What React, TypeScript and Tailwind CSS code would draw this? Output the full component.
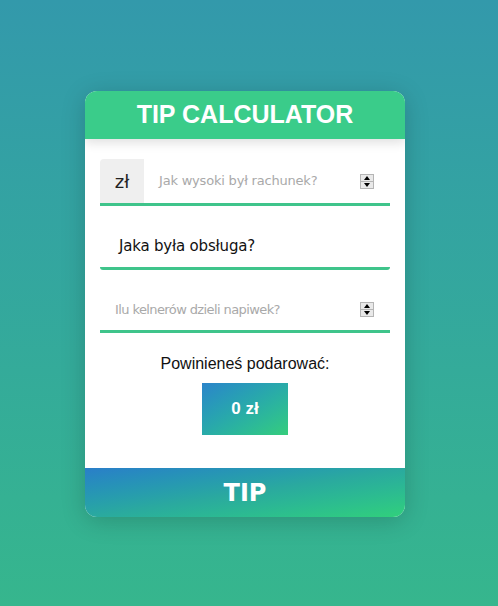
import React from "react";

function Spinner() {
  return (
    <div className="flex h-[15px] w-[14px] flex-col border border-[#b5b5b5] bg-[#e9e9e9]">
      <div className="flex flex-1 items-center justify-center border-b border-[#b5b5b5]">
        <div className="h-0 w-0 border-x-[3px] border-b-[4px] border-x-transparent border-b-black" />
      </div>
      <div className="flex flex-1 items-center justify-center">
        <div className="h-0 w-0 border-x-[3px] border-t-[4px] border-x-transparent border-t-black" />
      </div>
    </div>
  );
}

export default function App() {
  return (
    <div className="flex h-[606px] w-full justify-center bg-gradient-to-b from-[#3399ab] to-[#36b68d] pr-[8px] pt-[91px]">
      <div className="flex h-[426px] w-[320px] flex-col overflow-hidden rounded-[12px] bg-white shadow-[0_4px_24px_rgba(0,0,0,0.18)]">
        <div className="relative z-10 flex h-[48px] items-center justify-center bg-[#3acc8a] shadow-[0_4px_10px_rgba(0,0,0,0.12)]">
          <span className="text-[25px] font-bold text-white [font-family:'Liberation_Sans',Arial,sans-serif]">
            TIP CALCULATOR
          </span>
        </div>
        <div className="flex flex-1 flex-col px-[15px] pt-[20px] [font-family:'DejaVu_Sans',Verdana,sans-serif]">
          <div className="flex h-[47px] border-b-[3px] border-[#3fc48b]">
            <div className="flex w-[44px] items-center justify-center rounded-tl-[4px] bg-[#efefef] text-[18px] text-[#222]">
              zł
            </div>
            <div className="flex flex-1 items-center pl-[15px] pr-[16px]">
              <span className="flex-1 text-[13px] tracking-[-0.2px] text-[#a9a9a9]">Jak wysoki był rachunek?</span>
              <Spinner />
            </div>
          </div>
          <div className="mt-[20px] flex h-[44px] items-center rounded-b-[3px] border-b-[3px] border-[#3fc48b] pl-[19px]">
            <span className="text-[15px] text-[#111] tracking-[-0.2px]">Jaka była obsługa?</span>
          </div>
          <div className="mt-[19px] flex h-[44px] items-center border-b-[3px] border-[#3fc48b] pl-[15px] pr-[16px]">
            <span className="flex-1 text-[13px] tracking-[-0.6px] text-[#a9a9a9]">Ilu kelnerów dzieli napiwek?</span>
            <Spinner />
          </div>
          <div className="mt-[19px] text-center text-[16px] text-[#111] [font-family:'Liberation_Sans',Arial,sans-serif]">
            Powinieneś podarować:
          </div>
          <div className="mt-[7px] flex justify-center">
            <div className="flex h-[52px] w-[86px] items-center justify-center bg-gradient-to-br from-[#2c84ca] to-[#36cd7b] text-[17px] font-bold text-white [font-family:'Liberation_Sans',Arial,sans-serif]">
              0 zł
            </div>
          </div>
        </div>
        <div className="flex h-[49px] items-center justify-center bg-gradient-to-br from-[#2a7ec9] via-[#2aa99f] to-[#31d07b] text-[24px] font-bold text-white [font-family:'DejaVu_Sans',Verdana,sans-serif]">
          TIP
        </div>
      </div>
    </div>
  );
}
